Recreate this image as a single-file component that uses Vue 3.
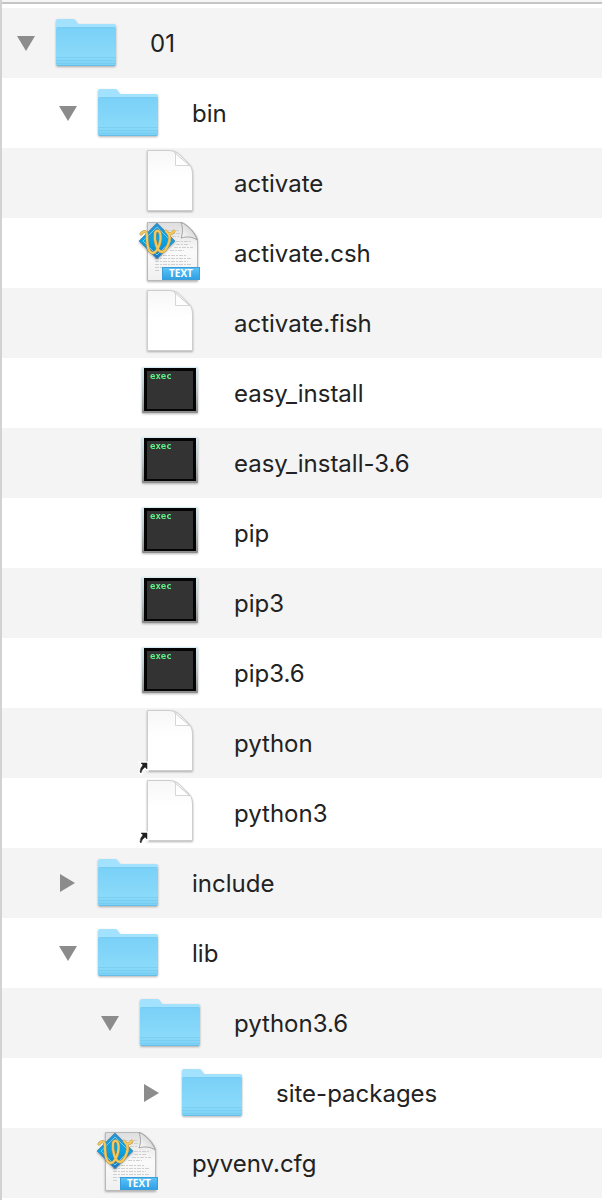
<template>
    <main class="browser">
        <ul class="file-list">
            <li v-for="item in items" :key="item.name" class="row" :class="'level-' + item.level">
                <button
                    v-if="item.type === 'folder'"
                    class="toggle"
                    :aria-expanded="item.open"
                    :aria-label="item.name"
                    @click="item.open = !item.open"
                >
                    <svg width="18" height="18" viewBox="0 0 18 18">
                        <path v-if="item.open" d="M0 2H18L9 17Z" fill="#8c8c8c" />
                        <path v-else d="M1 0L16 9L1 18Z" fill="#8c8c8c" />
                    </svg>
                </button>
                <span v-else class="toggle"></span>

                <svg class="icon" viewBox="0 0 64 68" aria-hidden="true">
                    <g v-if="item.type === 'folder'" class="shadow">
                        <path d="M2 12Q2 10 4 10H19Q21 10 22 12L24 15H60Q62 15 62 17V30H2Z" fill="#a3e2fe" />
                        <path d="M2 20Q2 18 4 18H60Q62 18 62 20V55Q62 57 60 57H4Q2 57 2 55Z" fill="url(#folder)" />
                        <path d="M3 18.500H61" stroke="#78ccf1" />
                        <path d="M2 48.500H62M2 51.500H62M2 54.500H62" stroke="#6dc5ec" stroke-opacity=".5" />
                        <path d="M3 56.500H61" stroke="#66bde6" />
                    </g>

                    <g v-else-if="item.type === 'exec'" class="shadow">
                        <rect x="4" y="8" width="56" height="46" rx="1" fill="url(#bezel)" />
                        <rect x="6" y="9" width="52" height="43" fill="#050505" />
                        <rect x="9" y="12" width="46" height="38" fill="#333" />
                        <text x="12" y="20" class="exec-text">exec</text>
                    </g>

                    <g v-else-if="item.type === 'text'">
                        <path class="shadow" d="M9.500 3.500H43C48 4 59 15 59.500 21V61.500H9.500Z" fill="url(#textpage)" stroke="#b8b8b8" />
                        <path d="M30 11.500H41M30 14.500H42M34 17.500H42M38 22.500H54M38 25.500H50M36 28.500H55M32 31.500H46M17 36.500H48M17 39.500H54M17 42.500H50M17 45.500H54M17 48.500H24M17 51.500H22" class="lines" />
                        <path d="M43 3.500C45 9 45 14 43 19C49 17 55 18 59 21C58 15 49 5 43 3.500Z" fill="url(#curl)" stroke="#a2a2a2" />
                        <path class="shadow" d="M19 4L37 22L19 40L1 22Z" fill="url(#diamond)" stroke="#5b93b8" />
                        <path d="M19 8L33 22L19 36L5 22Z" fill="none" stroke="#6bcdf2" />
                        <path class="w-edge" d="M3 15C6 11 9 12 9 17C9 25 10 34 15 34C20 33 24 21 22 14C21 11 18 11 17 14C16 21 19 33 24 33C29 32 33 20 31 16C30 14 29 13 28 12M31 15C33 15 35 14 36 12" />
                        <path class="w" d="M3 15C6 11 9 12 9 17C9 25 10 34 15 34C20 33 24 21 22 14C21 11 18 11 17 14C16 21 19 33 24 33C29 32 33 20 31 16C30 14 29 13 28 12M31 15C33 15 35 14 36 12" />
                        <rect x="24.500" y="48.500" width="37" height="12" fill="url(#label)" stroke="#3c9ddb" />
                        <text x="43" y="58" class="label-text">TEXT</text>
                    </g>

                    <g v-else>
                        <path class="shadow" d="M9.500 1.500H31C37 1.500 40 4 43 7L50 14C53 17 54.500 20 54.500 26V61.500H9.500Z" fill="url(#page)" stroke="#cdcdcd" />
                        <path d="M37.500 4V16.500H51" fill="#fff" stroke="#d6d6d6" />
                        <path d="M36 3L52 17" stroke="#cdcdcd" />
                        <g v-if="item.alias">
                            <path d="M3 54H9V60L7 58Q4 60 3 64L2 63Q2 59 5 56Z" fill="#fff" stroke="#fff" stroke-width="3" />
                            <path d="M3 54H9V60L7 58Q4 60 3 64L2 63Q2 59 5 56Z" fill="#222" stroke="#222" stroke-width=".5" />
                        </g>
                    </g>
                </svg>

                <span class="name">{{ item.name }}</span>
            </li>
        </ul>

        <svg class="defs" width="0" height="0" aria-hidden="true">
            <defs>
                <linearGradient id="folder" x1="0" y1="0" x2="0" y2="1">
                    <stop offset="0" stop-color="#79d0f7" />
                    <stop offset=".75" stop-color="#8adafa" />
                    <stop offset="1" stop-color="#7dd1f5" />
                </linearGradient>
                <linearGradient id="bezel" x1="0" y1="0" x2="0" y2="1">
                    <stop offset="0" stop-color="#d8ecf3" />
                    <stop offset=".5" stop-color="#b9c5c8" />
                    <stop offset="1" stop-color="#8b8b8b" />
                </linearGradient>
                <linearGradient id="page" x1="0" y1="0" x2="0" y2="1">
                    <stop offset="0" stop-color="#f7f7f7" />
                    <stop offset=".45" stop-color="#fff" />
                </linearGradient>
                <linearGradient id="textpage" x1="0" y1="0" x2="0" y2="1">
                    <stop offset="0" stop-color="#dedede" />
                    <stop offset=".5" stop-color="#fafafa" />
                    <stop offset="1" stop-color="#f0f0f0" />
                </linearGradient>
                <linearGradient id="curl" x1="0" y1="1" x2="1" y2="0">
                    <stop offset="0" stop-color="#fff" />
                    <stop offset="1" stop-color="#c4c4c4" />
                </linearGradient>
                <linearGradient id="diamond" x1="0" y1="0" x2="0" y2="1">
                    <stop offset="0" stop-color="#2f8fcc" />
                    <stop offset=".5" stop-color="#08a4e3" />
                    <stop offset="1" stop-color="#2474b8" />
                </linearGradient>
                <linearGradient id="label" x1="0" y1="0" x2="0" y2="1">
                    <stop offset="0" stop-color="#5cc4f7" />
                    <stop offset="1" stop-color="#2d9fe4" />
                </linearGradient>
            </defs>
        </svg>
    </main>
</template>

<script setup>

import { ref } from 'vue';

const items = ref([
    { name: '01', type: 'folder', level: 0, open: true },
    { name: 'bin', type: 'folder', level: 1, open: true },
    { name: 'activate', type: 'file', level: 2 },
    { name: 'activate.csh', type: 'text', level: 2 },
    { name: 'activate.fish', type: 'file', level: 2 },
    { name: 'easy_install', type: 'exec', level: 2 },
    { name: 'easy_install-3.6', type: 'exec', level: 2 },
    { name: 'pip', type: 'exec', level: 2 },
    { name: 'pip3', type: 'exec', level: 2 },
    { name: 'pip3.6', type: 'exec', level: 2 },
    { name: 'python', type: 'file', level: 2, alias: true },
    { name: 'python3', type: 'file', level: 2, alias: true },
    { name: 'include', type: 'folder', level: 1, open: false },
    { name: 'lib', type: 'folder', level: 1, open: true },
    { name: 'python3.6', type: 'folder', level: 2, open: true },
    { name: 'site-packages', type: 'folder', level: 3, open: false },
    { name: 'pyvenv.cfg', type: 'text', level: 1 }
])

</script>

<style>
body {
    margin: 0;
    background: #fff;
}
</style>

<style scoped>
.browser {
    box-sizing: border-box;
    min-height: 100vh;
    border-left: 2px solid #d2d2d2;
    font-family: Inter, "Liberation Sans", sans-serif;
    color: #222;
}

.browser::before {
    content: "";
    display: block;
    height: 2px;
    margin-bottom: 4px;
    background: #f6f6f6;
    border-bottom: 2px solid #c5c5c5;
}

.file-list {
    list-style: none;
    margin: 0;
    padding: 0;
}

.row {
    display: flex;
    align-items: center;
    height: 70px;
    padding-left: 15px;
}

.row:nth-child(odd) {
    background: #f4f4f4;
}

.level-1 {
    padding-left: 57px;
}

.level-2 {
    padding-left: 99px;
}

.level-3 {
    padding-left: 141px;
}

.toggle {
    flex: none;
    display: flex;
    width: 18px;
    padding: 0;
    border: 0;
    background: none;
}

.icon {
    flex: none;
    width: 64px;
    height: 68px;
    margin: 0 32px 0 19px;
}

.name {
    padding-top: 2px;
    font-size: 24px;
    line-height: 32px;
    white-space: nowrap;
}

.shadow {
    filter: drop-shadow(0 1px 1px rgba(0, 0, 0, 0.3));
}

.exec-text {
    font: bold 9px "DejaVu Sans Mono", monospace;
    fill: #5df587;
}

.lines {
    stroke: #d0d0d0;
    stroke-dasharray: 4 1 2 1;
}

.w,
.w-edge {
    fill: none;
    stroke: #f5ca5c;
    stroke-width: 2;
    stroke-linecap: round;
    stroke-linejoin: round;
}

.w-edge {
    stroke: #b99650;
    stroke-width: 3;
}

.label-text {
    font: bold 10px "Open Sans", sans-serif;
    fill: #fff;
    text-anchor: middle;
}

.defs {
    position: absolute;
}
</style>
